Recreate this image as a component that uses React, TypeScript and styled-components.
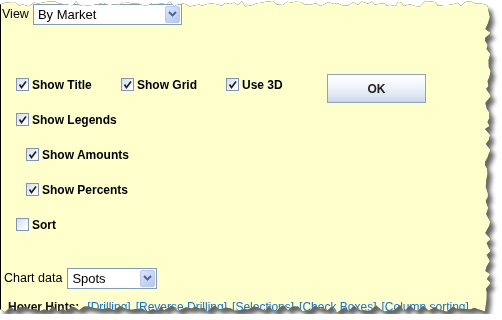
import React from 'react';
import styled, { createGlobalStyle } from 'styled-components';

const GlobalStyle = createGlobalStyle`
  html, body {
    margin: 0;
    padding: 0;
    background: #fff;
  }
  body {
    font-family: "Liberation Sans", Arial, sans-serif;
    color: #000;
  }
`;

const PAPER_W = 492;
const PAPER_H = 314;

// torn paper outline, seeded so it looks the same on every load
const tornEdge = (() => {
    let seed = 11;
    const rand = () => {
        seed = (seed * 9301 + 49297) % 233280;
        return seed / 233280;
    };
    const pts: string[] = [];
    for (let x = 0; x <= PAPER_W - 7; x += 3 + Math.floor(rand() * 4)) {
        pts.push(`${x}px ${(1 + rand() * 5.5).toFixed(1)}px`);
    }
    for (let y = 6; y <= PAPER_H - 9; y += 3 + Math.floor(rand() * 5)) {
        pts.push(`${(PAPER_W - 7 + rand() * 6).toFixed(1)}px ${y}px`);
    }
    for (let x = PAPER_W - 7; x >= 0; x -= 3 + Math.floor(rand() * 4)) {
        pts.push(`${x}px ${(PAPER_H - 9 + rand() * 7).toFixed(1)}px`);
    }
    pts.push(`0px ${PAPER_H - 5}px`);
    return `polygon(${pts.join(', ')})`;
})();

const Shadow = styled.div`
    width: ${PAPER_W}px;
    height: ${PAPER_H}px;
    filter: drop-shadow(0 0 0.5px #000) drop-shadow(4px 5px 2px rgba(0, 0, 0, 0.6));
`;

const Paper = styled.div`
    width: 100%;
    height: 100%;
    box-sizing: border-box;
    background: #ffffcc;
    border-left: 1px solid #000;
    clip-path: ${tornEdge};
    display: flex;
    flex-direction: column;
`;

const FieldRow = styled.div<{ $top: number; $left: number; $gap: number }>`
    display: flex;
    align-items: center;
    height: 22px;
    margin-top: ${p => p.$top}px;
    padding-left: ${p => p.$left}px;
    gap: ${p => p.$gap}px;
`;

const Label = styled.span`
    font-size: 12.5px;
`;

const Select = styled.div<{ $width: number }>`
    width: ${p => p.$width}px;
    height: 21px;
    box-sizing: border-box;
    display: flex;
    align-items: stretch;
    border: 1px solid #7f9db9;
    background: #fff;
`;

const SelectValue = styled.span`
    flex: 1;
    padding-left: 4px;
    font-size: 13px;
    line-height: 19px;
`;

const SelectArrow = styled.span`
    width: 15px;
    margin: 1px;
    box-sizing: border-box;
    border: 1px solid #b9c9ef;
    border-radius: 2px;
    background: linear-gradient(135deg, #dbe5fc, #b3c6f3);
    display: flex;
    align-items: center;
    justify-content: center;
`;

const OptionRow = styled.div<{ $indent: number; $top?: number }>`
    display: flex;
    align-items: center;
    height: 35px;
    margin-top: ${p => p.$top ?? 0}px;
    padding-left: ${p => p.$indent}px;
`;

const Check = styled.label<{ $width?: number }>`
    display: flex;
    align-items: center;
    gap: 3px;
    width: ${p => (p.$width ? `${p.$width}px` : 'auto')};
    font-size: 12px;
    font-weight: bold;
`;

const Box = styled.span`
    width: 13px;
    height: 13px;
    box-sizing: border-box;
    border: 1px solid #8096b8;
    background: linear-gradient(135deg, #d4dcec, #f6f8fc 70%, #fff);
    display: flex;
    align-items: center;
    justify-content: center;
`;

const OkButton = styled.button`
    align-self: flex-end;
    width: 99px;
    height: 29px;
    margin-bottom: -1px;
    border: 1px solid #8ea3c0;
    border-radius: 0;
    background: linear-gradient(#ffffff, #f0f4fa 45%, #dbe4f2 80%, #c8d5ea);
    font-family: "Liberation Sans", Arial, sans-serif;
    font-size: 12px;
    font-weight: bold;
    color: #222;
    padding: 0;
`;

const Hints = styled.div`
    display: flex;
    gap: 8px;
    margin-top: 11px;
    padding-left: 7px;
    font-size: 12px;
    line-height: 14px;
    white-space: nowrap;
`;

const HintsTitle = styled.b`
    color: #111;
`;

const HintLinks = styled.span`
    display: flex;
    gap: 5px;
    color: #1470d8;
`;

const Chevron = () => (
    <svg width="9" height="6" viewBox="0 0 9 6">
        <path d="M1 1 L4.5 4.5 L8 1" fill="none" stroke="#4d6185" strokeWidth="1.8" />
    </svg>
);

const Tick = () => (
    <svg width="9" height="9" viewBox="0 0 9 9">
        <path d="M1.5 4.5 L3.5 7.5 L8 1.5" fill="none" stroke="#222" strokeWidth="1.7" />
    </svg>
);

const CheckBox: React.FC<{ label: string; checked: boolean; width?: number }> = ({ label, checked, width }) => (
    <Check $width={width}>
        <Box>{checked && <Tick />}</Box>
        {label}
    </Check>
);

const Dropdown: React.FC<{ value: string; width: number }> = ({ value, width }) => (
    <Select $width={width}>
        <SelectValue>{value}</SelectValue>
        <SelectArrow><Chevron /></SelectArrow>
    </Select>
);

const links = ['[Drilling]', '[Reverse Drilling]', '[Selections]', '[Check Boxes]', '[Column sorting]'];

const App: React.FC = () => (
    <>
        <GlobalStyle />
        <Shadow>
            <Paper>
                <FieldRow $top={3} $left={1} $gap={4}>
                    <Label>View</Label>
                    <Dropdown value="By Market" width={149} />
                </FieldRow>

                <OptionRow $indent={15} $top={42}>
                    <CheckBox label="Show Title" checked width={105} />
                    <CheckBox label="Show Grid" checked width={105} />
                    <CheckBox label="Use 3D" checked width={101} />
                    <OkButton>OK</OkButton>
                </OptionRow>
                <OptionRow $indent={15}>
                    <CheckBox label="Show Legends" checked />
                </OptionRow>
                <OptionRow $indent={25}>
                    <CheckBox label="Show Amounts" checked />
                </OptionRow>
                <OptionRow $indent={25}>
                    <CheckBox label="Show Percents" checked />
                </OptionRow>
                <OptionRow $indent={15}>
                    <CheckBox label="Sort" checked={false} />
                </OptionRow>

                <FieldRow $top={25} $left={3} $gap={5}>
                    <Label>Chart data</Label>
                    <Dropdown value="Spots" width={90} />
                </FieldRow>

                <Hints>
                    <HintsTitle>Hover Hints:</HintsTitle>
                    <HintLinks>
                        {links.map(l => <span key={l}>{l}</span>)}
                    </HintLinks>
                </Hints>
            </Paper>
        </Shadow>
    </>
);

export default App;
